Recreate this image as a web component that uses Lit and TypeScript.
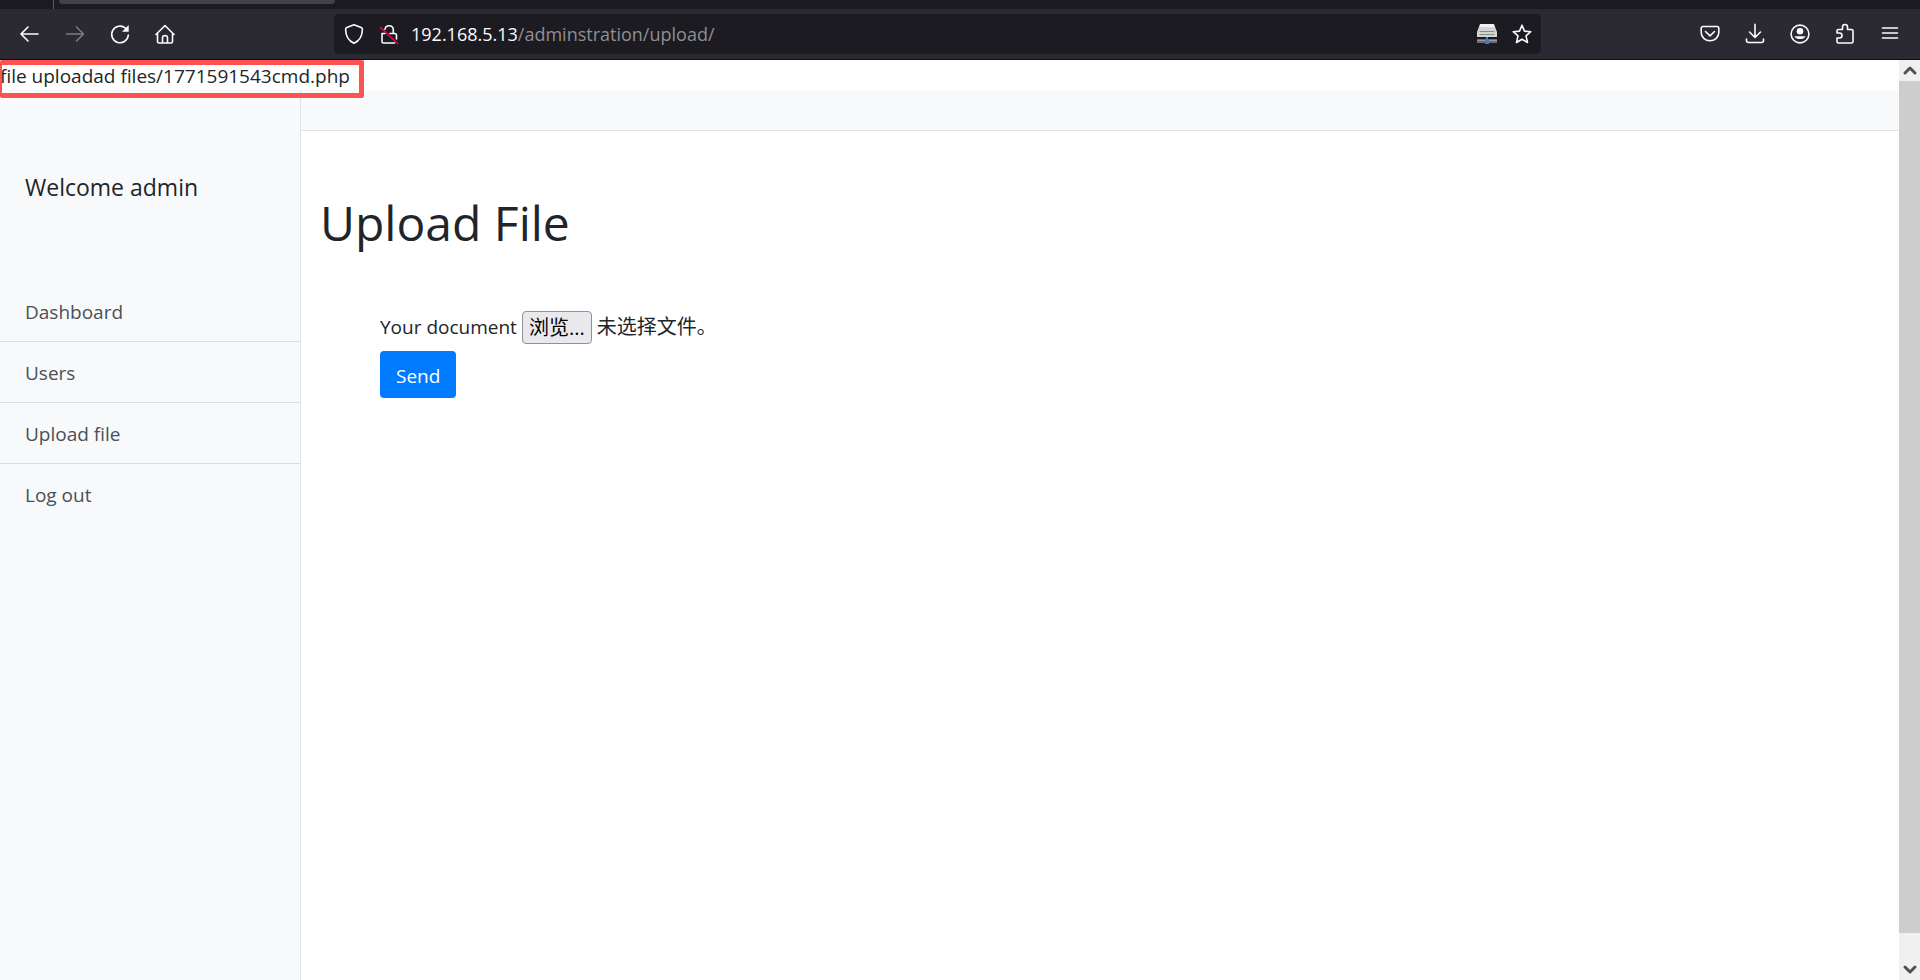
import { LitElement, html, css, svg } from "lit";
import { customElement, property } from "lit/decorators.js";

const icons: Record<string, unknown> = {
  back: svg`<path d="M18 10H1M8 3L1 10l7 7"/>`,
  forward: svg`<path d="M1.500 10h17M11.500 3l7 7l-7 7"/>`,
  reload: svg`<path d="M15.500 4.200A8.300 8.300 0 1 0 18.300 11"/><path d="M18.700 1v6.700h-6.700z" fill="currentColor" stroke="none"/>`,
  home: svg`<path d="M1 10.500L10 1.500l9 9M2.500 9.500v8a1.500 1.500 0 0 0 1.500 1.500h12a1.500 1.500 0 0 0 1.500-1.500v-8M7.500 19v-5a2.500 2.500 0 0 1 5 0v5"/>`,
  shield: svg`<path d="M10 .800L17.200 3.600a1.800 1.800 0 0 1 1.200 1.800C18.300 11.500 16 16.500 10 19.200C4 16.500 1.700 11.500 1.600 5.400a1.800 1.800 0 0 1 1.200-1.800z"/>`,
  insecure: svg`<path d="M6 5.200a4.200 4.200 0 0 1 8.300.300V9.500M3 9.500v8a1.500 1.500 0 0 0 1.500 1.500h11M11 9.500h4.500a2 2 0 0 1 2 2V15M3 9.500h3"/><path d="M1.500 3.500l17 16" stroke="#ff0039"/>`,
  star: svg`<path d="M10 1.200l2.500 5.900l6.300.6l-4.800 4.200l1.500 6.600L10 15.200l-5.500 3.300l1.500-6.600L1.200 7.700l6.300-.6z"/>`,
  pocket: svg`<path d="M3 2.500h14a1.800 1.800 0 0 1 1.800 1.800V8.500a8.800 8.300 0 0 1-17.600 0V4.300A1.800 1.800 0 0 1 3 2.500zM5.500 7.500L10 11.800l4.500-4.300"/>`,
  download: svg`<path d="M10 .200v13M4.500 8l5.500 5.500l5.500-5.500M1.500 15v1.500a2 2 0 0 0 2 2h13a2 2 0 0 0 2-2V15"/>`,
  account: svg`<circle cx="10" cy="10" r="8.900"/><g fill="currentColor" stroke="none"><circle cx="10" cy="7.300" r="3.300"/><path d="M4.500 12.200h11a5.700 3.800 0 0 1-11 0z"/></g>`,
  extension: svg`<path d="M2 9V7a1.500 1.500 0 0 1 1.500-1.500H7.500V3a2.500 2.500 0 0 1 5 0V5.500h4A1.500 1.500 0 0 1 18 7v10.500a1.500 1.500 0 0 1-1.500 1.500h-13A1.500 1.500 0 0 1 2 17.500V14h2.500a2.500 2.500 0 0 0 0-5H2z"/>`,
  menu: svg`<path d="M2.500 4h15M2.500 9h15M2.500 14h15"/>`,
  up: svg`<path d="M5 12.500l5-5l5 5" stroke-width="3"/>`,
  down: svg`<path d="M5 7.500l5 5l5-5" stroke-width="3"/>`,
  drive: svg`<g stroke="none"><path d="M3 0h14l3 8v5H0V8z" fill="#d4d4d4"/><path d="M3.500 0h13l1 3h-15z" fill="#f2f2f2"/><path d="M2.500 7h15v1H2.500zM2.500 10h15v1h-15z" fill="#8c8c8c"/><path d="M0 15h20v4H0z" fill="#6c6c6c"/><path d="M0 16h20v1H0z" fill="#999"/><path d="M9 13h2v2H9z" fill="#777"/><path d="M8 15.500h4V20H8z" fill="#3f78d8"/></g>`,
};

@customElement("ui-icon")
class UiIcon extends LitElement {
  @property() name = "";
  static styles = css`
    :host { display: block; width: 20px; height: 20px; flex: none; }
    svg { display: block; width: 100%; height: 100%; overflow: visible; fill: none; stroke: currentColor; stroke-width: 1.6; stroke-linecap: round; stroke-linejoin: round; }
  `;
  render() {
    return html`<svg viewBox="0 0 20 20" aria-hidden="true">${icons[this.name]}</svg>`;
  }
}

@customElement("browser-chrome")
class BrowserChrome extends LitElement {
  static styles = css`
    :host { display: block; background: #2b2a33; border-bottom: 1px solid #0c0c0d; color: #fbfbfe; }
    .tabs { display: flex; height: 9px; background: #1c1b22; }
    .pinned { width: 53px; border-right: 1px solid #5b5b66; }
    .tab { width: 276px; height: 4px; margin-left: 5px; background: #42414d; border-radius: 0 0 5px 5px; }
    .bar { display: flex; align-items: center; height: 50px; }
    .group { display: flex; gap: 5px; }
    .nav { width: 334px; box-sizing: border-box; padding-left: 10px; }
    .tools { margin-left: 149px; padding-right: 10px; }
    button { display: flex; align-items: center; justify-content: center; width: 40px; height: 40px; padding: 0; border: 0; background: none; color: inherit; }
    button:disabled { color: #7c7b83; }
    .url { flex: 1; display: flex; align-items: center; height: 40px; padding: 0 2px; background: #1c1b22; border-radius: 5px; min-width: 0; }
    .url button { width: 35px; }
    .address { flex: 1; padding-left: 5px; font-size: 18px; color: #8f8f94; }
    .host { color: #fbfbfe; }
  `;
  button(name: string, label: string, disabled = false) {
    return html`<button aria-label=${label} ?disabled=${disabled}><ui-icon name=${name}></ui-icon></button>`;
  }
  render() {
    return html`
      <div class="tabs"><div class="pinned"></div><div class="tab"></div></div>
      <div class="bar">
        <div class="group nav">
          ${this.button("back", "Back")}${this.button("forward", "Forward", true)}${this.button("reload", "Reload")}${this.button("home", "Home")}
        </div>
        <div class="url">
          ${this.button("shield", "Tracking protection")}${this.button("insecure", "Connection not secure")}
          <div class="address"><span class="host">192.168.5.13</span>/adminstration/upload/</div>
          ${this.button("drive", "Network")}${this.button("star", "Bookmark")}
        </div>
        <div class="group tools">
          ${this.button("pocket", "Pocket")}${this.button("download", "Downloads")}${this.button("account", "Account")}${this.button("extension", "Extensions")}${this.button("menu", "Menu")}
        </div>
      </div>`;
  }
}

@customElement("app-root")
class AppRoot extends LitElement {
  static styles = css`
    :host { display: flex; flex-direction: column; height: 100vh; overflow: hidden; background: #fff; color: #212529; font: 19px/30px "Open Sans", "Noto Sans CJK SC", sans-serif; }
    .viewport { flex: 1; display: flex; min-height: 0; }
    .page { flex: 1; display: flex; flex-direction: column; min-width: 0; }
    .notice { position: relative; height: 30px; line-height: 32px; }
    .mark { position: absolute; top: 0; left: 0; box-sizing: border-box; width: 364px; height: 38px; border: 5px solid #ff5252; border-left-width: 2px; border-radius: 2px; }
    .layout { flex: 1; display: flex; }
    .sidebar { width: 300px; background: #f8f9fa; border-right: 1px solid #dee2e6; }
    .welcome { padding: 79px 25px 76px; font-size: 23px; line-height: 36px; }
    .links a { display: block; padding: 16px 25px 14px; color: #495057; text-decoration: none; border-bottom: 1px solid #d9dbde; }
    .links a:last-child { border-bottom: 0; }
    .content { flex: 1; min-width: 0; }
    .topbar { height: 40px; background: #f8f9fa; border-bottom: 1px solid #dee2e6; }
    .main { padding: 62px 19px; }
    h1 { margin: 0; font-size: 48px; line-height: 60px; font-weight: 400; }
    .form { padding: 57px 60px; }
    .row { display: flex; align-items: center; gap: 5px; height: 34px; }
    .row label, .state { line-height: 32px; }
    .picker { display: none; }
    .browse { height: 33px; padding: 0 6px; border: 1px solid #8f8f9d; border-radius: 4px; background: #e9e9ed; color: #000; font: inherit; font-size: 20px; line-height: 32px; }
    .state { font-size: 20px; }
    .send { display: block; margin-top: 7px; height: 47px; padding: 2px 16px 0; border: 0; border-radius: 4px; background: #007bff; color: #fff; font: inherit; }
    .scroll { width: 21px; display: flex; flex-direction: column; align-items: center; background: #f0f0f0; color: #505050; }
    .scroll ui-icon { height: 21px; }
    .track { flex: 1; width: 100%; }
    .thumb { height: 97%; background: #cdcdcd; }
  `;
  pick() {
    (this.renderRoot.querySelector(".picker") as HTMLInputElement).click();
  }
  render() {
    return html`
      <browser-chrome></browser-chrome>
      <div class="viewport">
        <div class="page">
          <div class="notice">file uploadad files/1771591543cmd.php<div class="mark"></div></div>
          <div class="layout">
            <aside class="sidebar">
              <div class="welcome">Welcome admin</div>
              <nav class="links">
                ${["Dashboard", "Users", "Upload file", "Log out"].map((t) => html`<a href="#">${t}</a>`)}
              </nav>
            </aside>
            <div class="content">
              <div class="topbar"></div>
              <main class="main">
                <h1>Upload File</h1>
                <form class="form" @submit=${(e: Event) => e.preventDefault()}>
                  <div class="row">
                    <label for="browse">Your document</label>
                    <input class="picker" type="file" aria-label="Your document" />
                    <button class="browse" id="browse" type="button" @click=${this.pick}>浏览...</button>
                    <span class="state">未选择文件。</span>
                  </div>
                  <button class="send" type="submit">Send</button>
                </form>
              </main>
            </div>
          </div>
        </div>
        <div class="scroll">
          <ui-icon name="up"></ui-icon>
          <div class="track"><div class="thumb"></div></div>
          <ui-icon name="down"></ui-icon>
        </div>
      </div>`;
  }
}
